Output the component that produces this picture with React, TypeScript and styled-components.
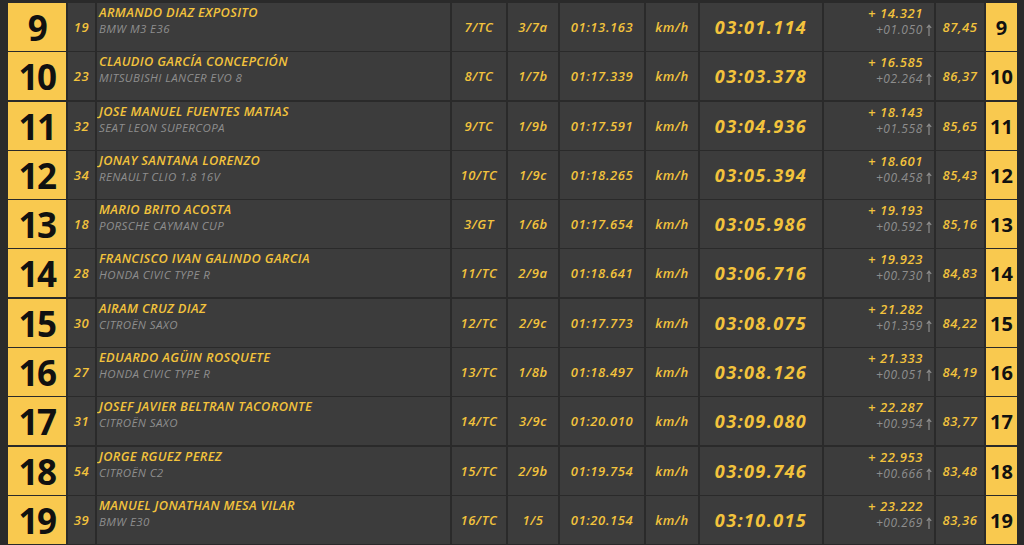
import React from "react";
import styled, { createGlobalStyle } from "styled-components";

const GlobalStyle = createGlobalStyle`
  html, body {
    margin: 0;
    padding: 0;
    background: #2a2a2a;
    overflow: hidden;
  }
  body {
    font-family: "Open Sans", "Liberation Sans", sans-serif;
  }
`;

type Entry = {
  pos: number;
  num: number;
  driver: string;
  car: string;
  cls: string;
  cat: string;
  lap: string;
  total: string;
  gap: string;
  prev: string;
  speed: string;
};

const entries: Entry[] = [
  { pos: 9, num: 19, driver: "ARMANDO DIAZ EXPOSITO", car: "BMW M3 E36", cls: "7/TC", cat: "3/7a", lap: "01:13.163", total: "03:01.114", gap: "+ 14.321", prev: "+01.050", speed: "87,45" },
  { pos: 10, num: 23, driver: "CLAUDIO GARCÍA CONCEPCIÓN", car: "MITSUBISHI LANCER EVO 8", cls: "8/TC", cat: "1/7b", lap: "01:17.339", total: "03:03.378", gap: "+ 16.585", prev: "+02.264", speed: "86,37" },
  { pos: 11, num: 32, driver: "JOSE MANUEL FUENTES MATIAS", car: "SEAT LEON SUPERCOPA", cls: "9/TC", cat: "1/9b", lap: "01:17.591", total: "03:04.936", gap: "+ 18.143", prev: "+01.558", speed: "85,65" },
  { pos: 12, num: 34, driver: "JONAY SANTANA LORENZO", car: "RENAULT CLIO 1.8 16V", cls: "10/TC", cat: "1/9c", lap: "01:18.265", total: "03:05.394", gap: "+ 18.601", prev: "+00.458", speed: "85,43" },
  { pos: 13, num: 18, driver: "MARIO BRITO ACOSTA", car: "PORSCHE CAYMAN CUP", cls: "3/GT", cat: "1/6b", lap: "01:17.654", total: "03:05.986", gap: "+ 19.193", prev: "+00.592", speed: "85,16" },
  { pos: 14, num: 28, driver: "FRANCISCO IVAN GALINDO GARCIA", car: "HONDA CIVIC TYPE R", cls: "11/TC", cat: "2/9a", lap: "01:18.641", total: "03:06.716", gap: "+ 19.923", prev: "+00.730", speed: "84,83" },
  { pos: 15, num: 30, driver: "AIRAM CRUZ DIAZ", car: "CITROËN SAXO", cls: "12/TC", cat: "2/9c", lap: "01:17.773", total: "03:08.075", gap: "+ 21.282", prev: "+01.359", speed: "84,22" },
  { pos: 16, num: 27, driver: "EDUARDO AGÜIN ROSQUETE", car: "HONDA CIVIC TYPE R", cls: "13/TC", cat: "1/8b", lap: "01:18.497", total: "03:08.126", gap: "+ 21.333", prev: "+00.051", speed: "84,19" },
  { pos: 17, num: 31, driver: "JOSEF JAVIER BELTRAN TACORONTE", car: "CITROËN SAXO", cls: "14/TC", cat: "3/9c", lap: "01:20.010", total: "03:09.080", gap: "+ 22.287", prev: "+00.954", speed: "83,77" },
  { pos: 18, num: 54, driver: "JORGE RGUEZ PEREZ", car: "CITROËN C2", cls: "15/TC", cat: "2/9b", lap: "01:19.754", total: "03:09.746", gap: "+ 22.953", prev: "+00.666", speed: "83,48" },
  { pos: 19, num: 39, driver: "MANUEL JONATHAN MESA VILAR", car: "BMW E30", cls: "16/TC", cat: "1/5", lap: "01:20.154", total: "03:10.015", gap: "+ 23.222", prev: "+00.269", speed: "83,36" },
];

const Viewport = styled.div`
  height: 545px;
  overflow: hidden;
  padding-left: 8px;
`;

// the board is scrolled: neighbouring rows only show their edges
const Board = styled.div`
  display: flex;
  flex-direction: column;
  gap: 3px;
  margin-top: -46.3px;
`;

const Row = styled.div`
  display: grid;
  grid-template-columns: 58px 27px 353px 54px 50px 84px 52px 122px 110px 48px 31px;
  column-gap: 2px;
  height: 46.3px;
`;

const Cell = styled.div<{ $align?: "left" | "center" | "right" }>`
  background: #3c3c3c;
  display: flex;
  align-items: center;
  justify-content: ${(p) =>
    p.$align === "left" ? "flex-start" : p.$align === "right" ? "flex-end" : "center"};
  color: #f3c33c;
  font-style: italic;
  font-weight: 600;
  font-size: 13px;
  letter-spacing: 0.6px;
  white-space: nowrap;
  overflow: hidden;
`;

const PosCell = styled.div<{ $small?: boolean }>`
  background: #f9c94f;
  color: #111;
  display: flex;
  align-items: center;
  justify-content: center;
  font-family: "Open Sans", "Liberation Sans", sans-serif;
  font-weight: 700;
  font-size: ${(p) => (p.$small ? "20px" : "35px")};
  letter-spacing: ${(p) => (p.$small ? "0" : "-1.5px")};
  padding-top: 1px;
`;

const NameCell = styled(Cell)`
  flex-direction: column;
  align-items: flex-start;
  justify-content: flex-start;
  padding: 1px 0 0 2px;
`;

const Driver = styled.span`
  font-size: 12.8px;
  line-height: 17px;
  letter-spacing: 0.35px;
`;

const Car = styled.span`
  color: #8e8e8e;
  font-size: 11.5px;
  font-weight: 500;
  line-height: 16px;
  letter-spacing: 0.4px;
`;

const Total = styled(Cell)`
  font-size: 18px;
  font-weight: 700;
  letter-spacing: 1.4px;
`;

const GapCell = styled(Cell)`
  flex-direction: column;
  align-items: flex-end;
  justify-content: flex-start;
  padding: 1px 0 0 0;
`;

const GapMain = styled.span`
  line-height: 18px;
  margin-right: 11px;
`;

const GapPrev = styled.span`
  display: flex;
  align-items: center;
  gap: 3px;
  color: #8e8e8e;
  font-weight: 500;
  font-size: 12px;
  line-height: 16px;
  margin-right: 2px;
`;

const Arrow = () => (
  <svg width="6" height="12" viewBox="0 0 6 12">
    <path d="M3 12V1.5M0.8 4L3 1.2 5.2 4" stroke="#8e8e8e" strokeWidth="1.2" fill="none" />
  </svg>
);

// rows scrolled out of view: only their cell edges are visible
const EdgeRow = () => (
  <Row>
    <PosCell />
    <Cell />
    <Cell />
    <Cell />
    <Cell />
    <Cell />
    <Cell />
    <Cell />
    <Cell />
    <Cell />
    <PosCell $small />
  </Row>
);

export default function App() {
  return (
    <>
      <GlobalStyle />
      <Viewport>
        <Board>
          <EdgeRow />
          {entries.map((e) => (
            <Row key={e.pos}>
              <PosCell>{e.pos}</PosCell>
              <Cell>{e.num}</Cell>
              <NameCell>
                <Driver>{e.driver}</Driver>
                <Car>{e.car}</Car>
              </NameCell>
              <Cell>{e.cls}</Cell>
              <Cell>{e.cat}</Cell>
              <Cell>{e.lap}</Cell>
              <Cell>km/h</Cell>
              <Total>{e.total}</Total>
              <GapCell>
                <GapMain>{e.gap}</GapMain>
                <GapPrev>
                  {e.prev}
                  <Arrow />
                </GapPrev>
              </GapCell>
              <Cell>{e.speed}</Cell>
              <PosCell $small>{e.pos}</PosCell>
            </Row>
          ))}
          <EdgeRow />
        </Board>
      </Viewport>
    </>
  );
}
